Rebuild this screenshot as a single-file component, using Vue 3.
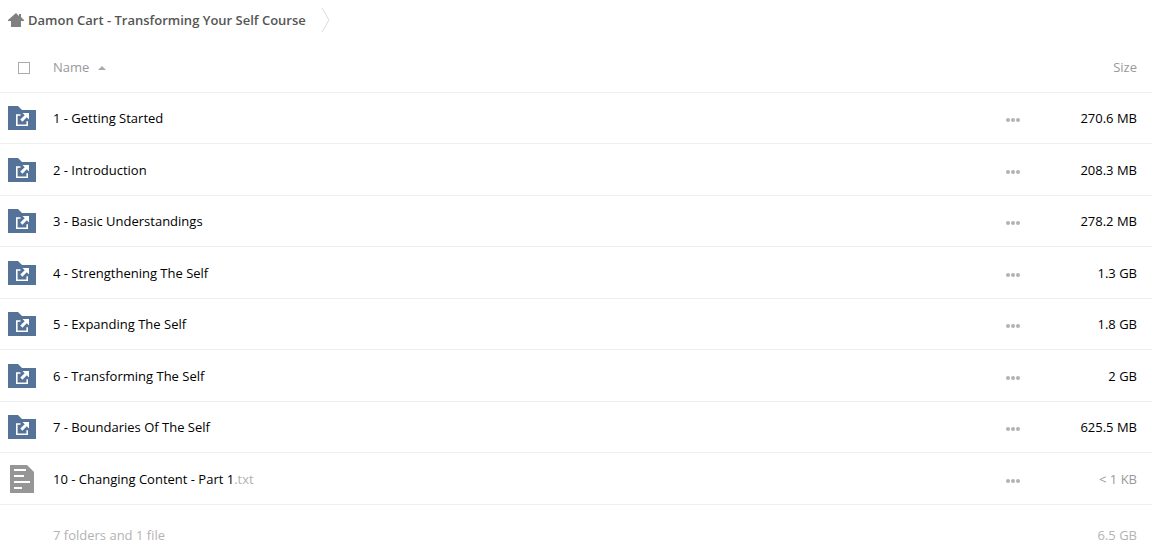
<script setup>
import { ref } from 'vue'

const allSelected = ref(false)
const rows = [
  { name: '1 - Getting Started', ext: '', size: '270.6 MB', folder: true },
  { name: '2 - Introduction', ext: '', size: '208.3 MB', folder: true },
  { name: '3 - Basic Understandings', ext: '', size: '278.2 MB', folder: true },
  { name: '4 - Strengthening The Self', ext: '', size: '1.3 GB', folder: true },
  { name: '5 - Expanding The Self', ext: '', size: '1.8 GB', folder: true },
  { name: '6 - Transforming The Self', ext: '', size: '2 GB', folder: true },
  { name: '7 - Boundaries Of The Self', ext: '', size: '625.5 MB', folder: true },
  { name: '10 - Changing Content - Part 1', ext: '.txt', size: '< 1 KB', folder: false }
]
</script>

<template>
  <main class="files">
    <nav class="crumbs" aria-label="Breadcrumb">
      <a class="crumb" href="#">
        <svg width="16" height="14" viewBox="0 0 16 14" aria-hidden="true">
          <path fill="#808080" d="M8 0 0 7v1h3v6h10V8h3V7l-3-3V1h-2v2z" />
        </svg>
        <span>Damon Cart - Transforming Your Self Course</span>
      </a>
      <svg class="chevron" width="10" height="26" viewBox="0 0 10 26" aria-hidden="true">
        <path fill="none" stroke="#ddd" d="M1 1 8 13 1 25" />
      </svg>
    </nav>

    <table class="list">
      <thead>
        <tr>
          <th class="icon"><input v-model="allSelected" class="tick" type="checkbox" aria-label="Select all" /></th>
          <th class="name"><button class="sort" type="button">Name <i class="caret"></i></button></th>
          <th class="menu"></th>
          <th class="size">Size</th>
        </tr>
      </thead>
      <tbody>
        <tr v-for="row in rows" :key="row.name">
          <td class="icon">
            <svg v-if="row.folder" width="28" height="24" viewBox="0 0 28 24" aria-hidden="true">
              <path fill="#557399" d="M0 0h10l4 4h14v20H0z" />
              <path fill="none" stroke="#fff" stroke-width="1.6" d="M12.5 9H8.8v10.2h10.4v-4" />
              <path fill="#fff" d="M14.5 7H21v6.5l-2.2-2.2-4.4 4.4-2.1-2.1 4.4-4.4z" />
            </svg>
            <svg v-else width="28" height="28" viewBox="0 0 28 28" aria-hidden="true">
              <path fill="#969696" d="M2 0h17l7 7v21H2z" />
              <path stroke="#fff" stroke-width="2" d="M6 5h12M6 11h10M6 17h16M6 23h8" />
            </svg>
          </td>
          <td class="name"><a href="#">{{ row.name }}<span class="ext">{{ row.ext }}</span></a></td>
          <td class="menu">
            <button class="more" type="button" :aria-label="'Actions for ' + row.name"><i></i><i></i><i></i></button>
          </td>
          <td class="size" :class="{ small: !row.folder }">{{ row.size }}</td>
        </tr>
      </tbody>
      <tfoot>
        <tr>
          <td class="icon"></td>
          <td class="name">7 folders and 1 file</td>
          <td class="menu"></td>
          <td class="size">6.5 GB</td>
        </tr>
      </tfoot>
    </table>
  </main>
</template>

<style>
body {
  background: #fff;
}
</style>

<style scoped>
.files {
  font: 13px/20px "Open Sans", sans-serif;
  color: #000;
}
.crumbs {
  display: flex;
  align-items: center;
  gap: 15px;
  height: 40px;
  margin-bottom: 2px;
  padding-left: 8px;
}
.crumb {
  display: flex;
  align-items: center;
  gap: 4px;
  color: #555;
  font-weight: 600;
  text-decoration: none;
}
svg {
  display: block;
}
.list {
  width: 100%;
  border-collapse: separate;
  border-spacing: 0;
  table-layout: fixed;
}
th,
td {
  height: 51px;
  padding: 0;
  box-sizing: border-box;
  text-align: left;
  font-weight: 400;
  border-bottom: 1px solid #eee;
}
tbody tr:nth-child(even) td {
  height: 52px;
}
th {
  color: #999;
}
tfoot td {
  height: 60px;
  color: #b3b3b3;
  border: 0;
}
.icon {
  width: 53px;
  padding-left: 8px;
}
.menu {
  width: 44px;
}
.size {
  width: 102px;
  padding-right: 15px;
  text-align: right;
}
.small {
  color: #999;
}
.tick {
  appearance: none;
  display: block;
  width: 12px;
  height: 12px;
  margin: 2px 0 0 10px;
  border: 1px solid #aaa;
  background: #fff;
}
.sort {
  display: flex;
  align-items: center;
  gap: 9px;
  padding: 0;
  border: 0;
  background: none;
  color: inherit;
  font: inherit;
}
.caret {
  margin-top: 2px;
  border: 4px solid transparent;
  border-top: 0;
  border-bottom-color: #aaa;
}
.name a {
  color: inherit;
  text-decoration: none;
}
.name .ext {
  color: #b3b3b3;
}
.more {
  display: flex;
  gap: 1px;
  padding: 12px 0 8px;
  border: 0;
  background: none;
}
.more i {
  width: 4px;
  height: 4px;
  border-radius: 50%;
  background: #b3b3b3;
}
</style>
